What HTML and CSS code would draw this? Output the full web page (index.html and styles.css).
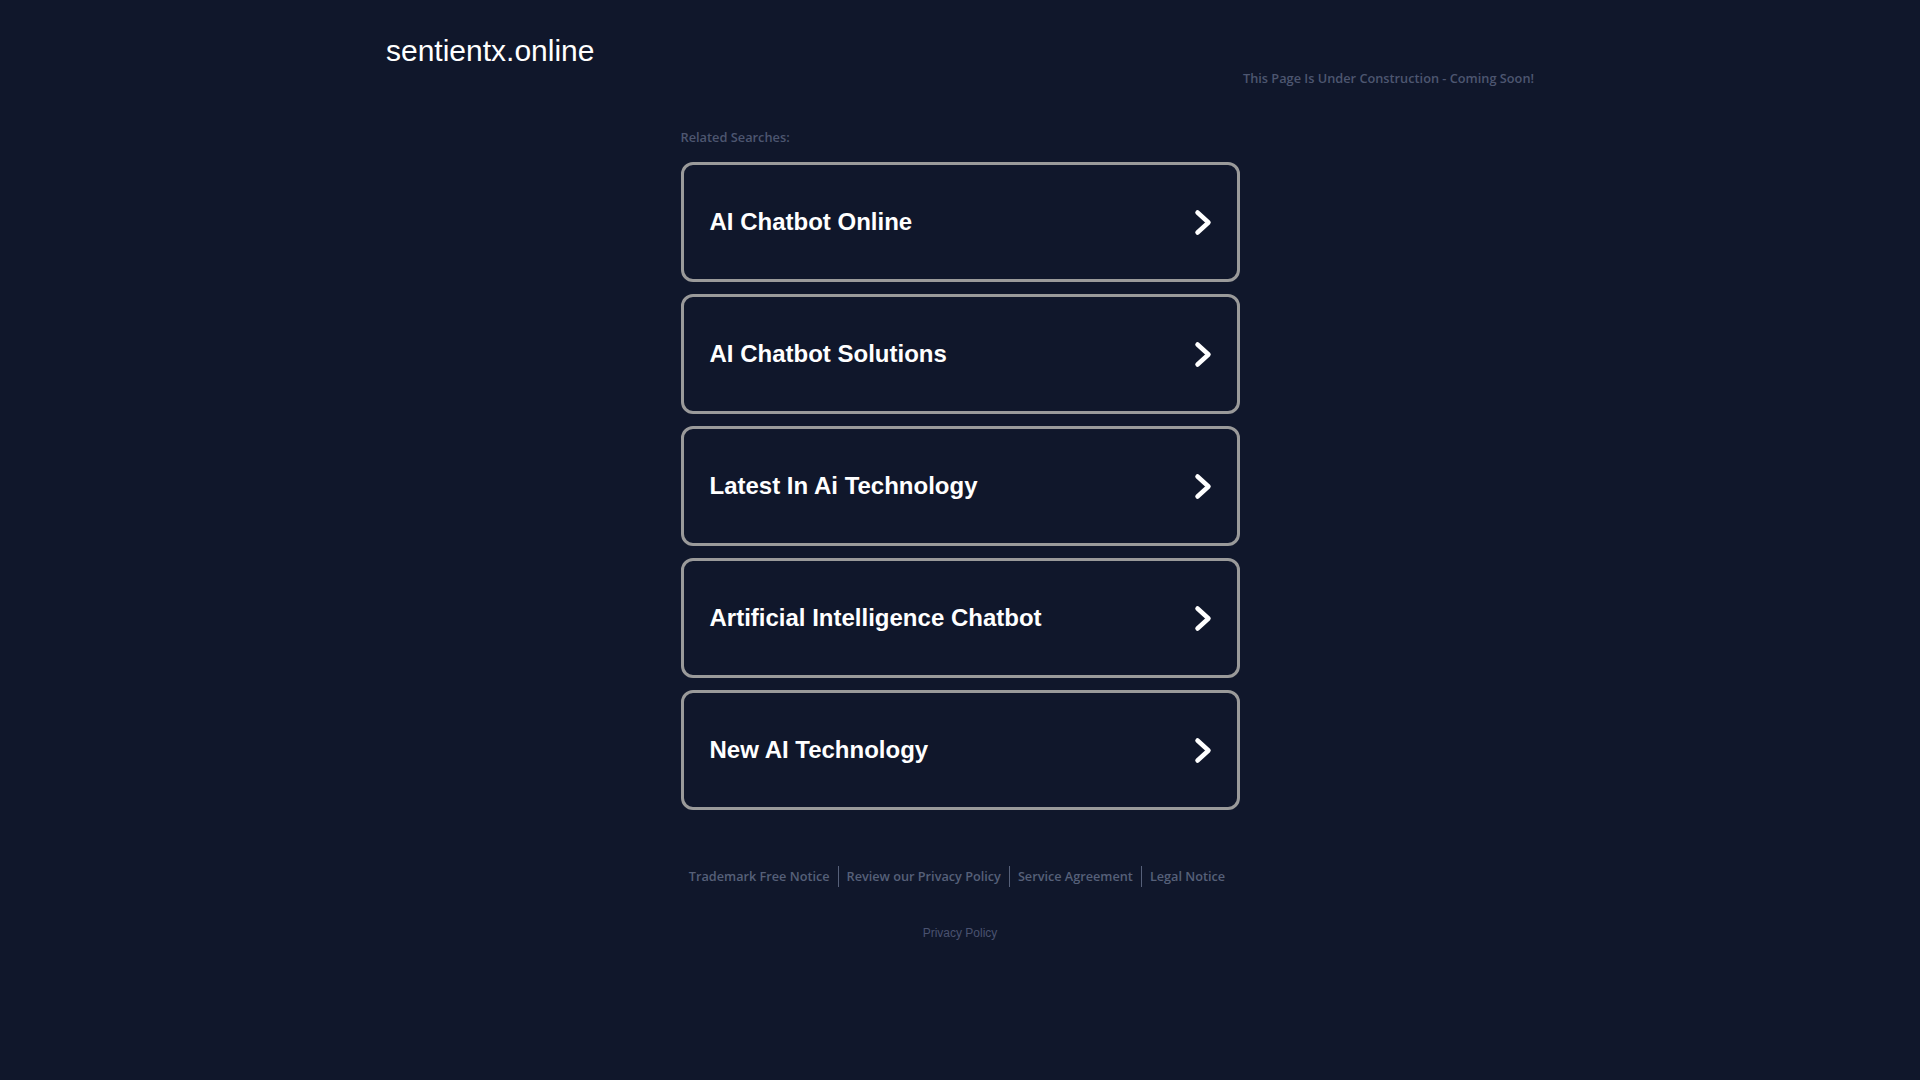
FILE: index.html
```html
<!DOCTYPE html>
<html lang="en">
<head>
    <meta charset="UTF-8">
    <meta name="viewport" content="width=device-width, initial-scale=1.0">
    <title>sentientx.online</title>
    <link rel="stylesheet" href="styles.css">
</head>
<body>
    <header class="header">
        <h1 class="domain">sentientx.online</h1>
        <p class="notice">This Page Is Under Construction - Coming Soon!</p>
    </header>

    <div class="container">
        <p class="related">Related Searches:</p>
        <div class="search-list">
            <a class="search-item" href="#"><span>AI Chatbot Online</span>
                <svg class="arrow" viewBox="0 0 18 27"><polyline points="3.5,3.5 14.5,13.5 3.5,23.5"/></svg></a>
            <a class="search-item" href="#"><span>AI Chatbot Solutions</span>
                <svg class="arrow" viewBox="0 0 18 27"><polyline points="3.5,3.5 14.5,13.5 3.5,23.5"/></svg></a>
            <a class="search-item" href="#"><span>Latest In Ai Technology</span>
                <svg class="arrow" viewBox="0 0 18 27"><polyline points="3.5,3.5 14.5,13.5 3.5,23.5"/></svg></a>
            <a class="search-item" href="#"><span>Artificial Intelligence Chatbot</span>
                <svg class="arrow" viewBox="0 0 18 27"><polyline points="3.5,3.5 14.5,13.5 3.5,23.5"/></svg></a>
            <a class="search-item" href="#"><span>New AI Technology</span>
                <svg class="arrow" viewBox="0 0 18 27"><polyline points="3.5,3.5 14.5,13.5 3.5,23.5"/></svg></a>
        </div>
    </div>

    <footer>
        <div class="footer-links">
            <a href="#">Trademark Free Notice</a>
            <a href="#">Review our Privacy Policy</a>
            <a href="#">Service Agreement</a>
            <a href="#">Legal Notice</a>
        </div>
        <p class="privacy"><a href="#">Privacy Policy</a></p>
    </footer>
</body>
</html>
```

FILE: styles.css
```css
body {
    margin: 0;
    padding: 0;
    background: #10172b;
    font-family: "Open Sans", Arial, sans-serif;
    color: #fff;
}

a {
    text-decoration: none;
}

.header {
    width: 1148px;
    margin: 0 auto;
    display: flex;
    justify-content: space-between;
    align-items: flex-start;
}

.domain {
    margin: 34px 0 0;
    font-family: "Liberation Sans", Arial, sans-serif;
    font-size: 30px;
    line-height: 34px;
    font-weight: normal;
    color: #fff;
}

.notice {
    margin: 70px 0 0;
    font-size: 12.75px;
    line-height: 16px;
    font-weight: 600;
    color: #4d5670;
}

.container {
    width: 559px;
    margin: 0 auto;
}

.related {
    margin: 43px 0 17px;
    font-size: 12.8px;
    line-height: 16px;
    font-weight: 600;
    color: #4d5670;
}

.search-list {
    display: flex;
    flex-direction: column;
    gap: 12px;
}

.search-item {
    height: 114px;
    border: 3px solid #9a9a9a;
    border-radius: 12px;
    padding: 0 25px 0 26px;
    display: flex;
    align-items: center;
    justify-content: space-between;
    font-family: "Liberation Sans", Arial, sans-serif;
    font-size: 24px;
    font-weight: bold;
    color: #fff;
}

.arrow {
    width: 18px;
    height: 27px;
    fill: none;
    stroke: #fff;
    stroke-width: 4.5;
    stroke-linecap: round;
    stroke-linejoin: round;
}

footer {
    text-align: center;
    margin-top: 56px;
}

.footer-links {
    display: flex;
    justify-content: center;
    align-items: center;
    margin-right: 6px;
}

.footer-links a {
    font-size: 12.7px;
    line-height: 21px;
    font-weight: 600;
    color: #566079;
    padding: 0 8px;
    border-left: 1px solid #566079;
}

.footer-links a:first-child {
    border-left: none;
}

.privacy {
    margin: 39px 0 0;
    font-family: "Liberation Sans", Arial, sans-serif;
    font-size: 12px;
    line-height: 14px;
}

.privacy a {
    color: #4a5270;
}
```
